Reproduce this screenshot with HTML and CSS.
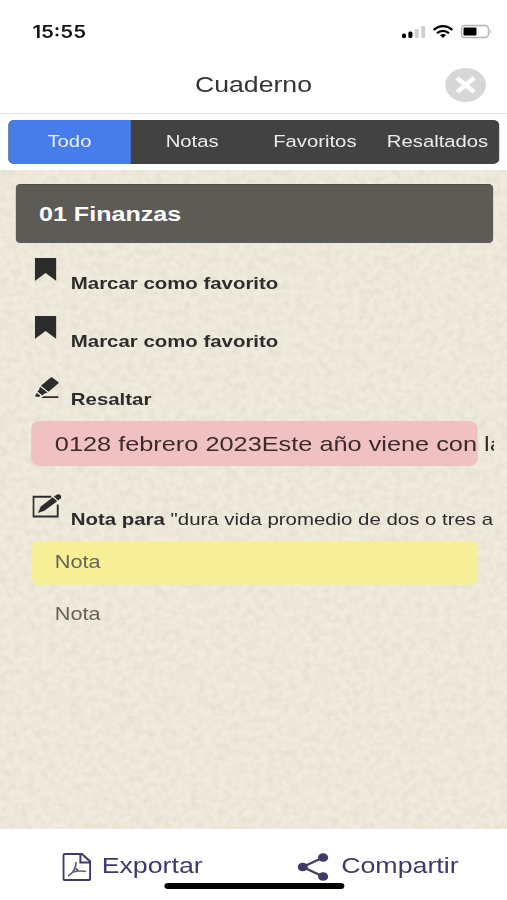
FILE: index.html
```html
<!DOCTYPE html>
<html lang="es">
<head>
<meta charset="utf-8">
<meta name="viewport" content="width=device-width">
<title>Cuaderno</title>
<link rel="stylesheet" href="styles.css">
</head>
<body>
<div class="screen">
  <div class="status">
    <span class="time">15:55</span>
    <svg class="status-icons" viewBox="0 0 90 16" preserveAspectRatio="none">
      <g><rect x="0" y="9.5" width="4" height="4.5" rx="1.5"/><rect x="6.4" y="7.500" width="4" height="6.5" rx="1.5"/></g>
      <g fill="#d0d0d0"><rect x="12.8" y="5" width="4" height="9" rx="1"/><rect x="19.2" y="2" width="4" height="12" rx="1"/></g>
      <g fill="none" stroke="#000" stroke-width="2.3"><path d="M31.6 5.8Q41 -1.500 50.400 5.800M35 9.200Q41 4.500 47 9.200"/></g>
      <path d="M38 11.100Q41 9.100 44 11.100L41 13.900Z"/>
      <rect x="59.500" y="1.500" width="27" height="12" rx="3.500" fill="#fff" stroke="#b4b4b4" stroke-width="1.500"/>
      <rect x="61.500" y="3.500" width="13" height="8" rx="1.300"/>
      <path d="M87.900 5.500Q90 7.500 87.900 9.500Z" fill="#b4b4b4"/>
    </svg>
  </div>
  <header class="header">
    <h1>Cuaderno</h1>
    <button class="close" aria-label="Cerrar"><svg viewBox="0 0 34 34"><circle cx="17" cy="17" r="17" fill="#d7d7d7"/><path d="M10 10L24 24M24 10L10 24" stroke="#fff" stroke-width="4"/></svg></button>
  </header>
  <div class="tabbar">
    <nav class="tabs">
      <a class="tab active">Todo</a><a class="tab">Notas</a><a class="tab">Favoritos</a><a class="tab">Resaltados</a>
    </nav>
  </div>
  <main class="paper">
    <svg class="grain" aria-hidden="true">
      <filter id="fibre" x="0" y="0" width="100%" height="100%">
        <feTurbulence type="fractalNoise" baseFrequency="0.17 0.15" numOctaves="3" seed="8"/>
        <feColorMatrix values="0 0 0 0 .56  0 0 0 0 .48  0 0 0 0 .32  .4 0 0 0 -.13"/>
      </filter>
      <rect width="100%" height="100%" filter="url(#fibre)"/>
    </svg>
    <div class="notebook">
      <h2 class="chapter">01 Finanzas</h2>
      <div class="entry"><svg class="icon mark" viewBox="0 0 22 23" preserveAspectRatio="none"><path d="M0 0H22V23L11 15L0 23Z"/></svg><b>Marcar como favorito</b></div>
      <div class="entry"><svg class="icon mark" viewBox="0 0 22 23" preserveAspectRatio="none"><path d="M0 0H22V23L11 15L0 23Z"/></svg><b>Marcar como favorito</b></div>
      <div class="entry"><svg class="icon marker" viewBox="0 0 25 22" preserveAspectRatio="none"><path d="M16.200 .5Q17 -.2 17.800 .5L23.800 5Q24.700 5.800 23.800 6.500L14 14.800L6.200 8.800ZM5.300 9.700L13 15.600L9.500 16.800L7.800 18.500L2.600 14.600L4.300 12.800ZM2 16L5.800 18.800L4 20L0 19.300ZM9 19.200H24V21H6.500Z"/></svg><b>Resaltar</b></div>
      <div class="highlight">0128 febrero 2023Este año viene con la</div>
      <div class="entry note-entry"><svg class="icon edit" viewBox="0 0 29 24" preserveAspectRatio="none"><path d="M19 2.800H1V22.500H25.500V10.500" fill="none" stroke="#2c2c2c" stroke-width="1.900"/><path d="M5.500 19L8.500 12.600L20.500 3.300L25 7.300L12 16.800ZM21.700 2.600L24 .9Q26.500 -.7 28.500 1.500T28 4.800L25.900 6.500Z"/></svg><span><b>Nota para</b> "dura vida promedio de dos o tres a</span></div>
      <div class="note">Nota</div>
      <div class="note plain">Nota</div>
    </div>
  </main>
  <footer class="footer">
    <a class="action export"><svg viewBox="0 0 28 28" preserveAspectRatio="none" fill="none" stroke="#41396a" stroke-width="2"><path d="M1 2.200Q1 1 2.500 1H19L27 8.500V25.500Q27 27 25.500 27H2.500Q1 27 1 25.500ZM17.500 1V9.500H27"/><path stroke="#625d73" stroke-width="1.700" d="M5.500 23Q13 18.500 13.300 9M13 15.500L15.500 17.800L23 18.500M10.500 19L15.500 17.800"/></svg><span>Exportar</span></a>
    <a class="action share"><svg viewBox="0 0 30 28" preserveAspectRatio="none" fill="#41396a"><path d="M25 4.500L5 14L25 23.500" fill="none" stroke="#41396a" stroke-width="2.300"/><ellipse cx="25" cy="4.500" rx="5" ry="4.300"/><ellipse cx="5" cy="14" rx="5" ry="4.300"/><ellipse cx="25" cy="23.500" rx="5" ry="4.300"/></svg><span>Compartir</span></a>
    <i class="home"></i>
  </footer>
</div>
</body>
</html>
```
FILE: styles.css
```css
* { box-sizing: border-box; }
body { margin: 0; overflow: hidden; background: #fff; }

.screen {
  width: 422.5px;
  height: 900px;
  display: flex;
  flex-direction: column;
  transform: scaleX(1.2);
  transform-origin: 0 0;
  font-family: "Liberation Sans", Arial, sans-serif;
  color: #2c2c2c;
}
.status {
  height: 56px;
  padding: 7px 13px 0 27px;
  display: flex;
  align-items: center;
  justify-content: space-between;
}
.time { font: 600 17px "Inter", sans-serif; color: #111; }
.status-icons { width: 75px; height: 16px; }
.header {
  height: 58px;
  display: flex;
  align-items: center;
  justify-content: center;
  position: relative;
  border-bottom: 1px solid #dfdfdf;
}
h1 { margin: 0; padding-top: 1px; font-size: 22.2px; font-weight: 400; color: #333; }
.close {
  position: absolute;
  right: 17.5px;
  top: 12px;
  width: 34px;
  height: 34px;
  padding: 0;
  border: 0;
  background: none;
}
.close svg { display: block; }
.tabbar { height: 56px; padding: 6px 6.5px 6px 7px; }
.tabs {
  display: grid;
  grid-template-columns: repeat(4, 1fr);
  height: 44px;
  border-radius: 5px;
  overflow: hidden;
  background: #424242;
}
.tab {
  display: flex;
  align-items: center;
  justify-content: center;
  padding: 0 .5px 1px 0;
  font-size: 16.9px;
  color: #ececec;
}
.tab.active { background: #477ceb; }
.paper {
  position: relative;
  height: 659px;
  padding: 14px 12px 0 12.5px;
  background: #efebde;
}
.grain { position: absolute; inset: 0; width: 100%; height: 100%; }
.notebook { position: relative; overflow: hidden; height: 560px; }
.chapter {
  margin: 0;
  height: 59px;
  padding-left: 20px;
  line-height: 58px;
  border-radius: 4px;
  font-size: 20.9px;
  color: #fff;
  background: #5d5b56;
  border-top: 1px solid #504c44;
}
.entry {
  display: flex;
  height: 58px;
  padding: 14px 0 0 16px;
  font-size: 17px;
  white-space: nowrap;
}
.entry > b, .entry > span { line-height: 20px; margin-top: 17px; }
.icon { flex: none; fill: #2c2c2c; }
.mark { width: 18px; height: 23px; margin: 1px 12px 0 .5px; }
.marker { width: 20.5px; height: 22px; margin: 4px 9.5px 0 .5px; }
.highlight {
  width: 372px;
  height: 45px;
  margin: 4px 0 0 13px;
  padding-left: 20.2px;
  line-height: 45px;
  border-radius: 7px;
  background: #f0c1c3;
  color: #3c292b;
  font-size: 21.1px;
  white-space: nowrap;
}
.note-entry { height: 75px; padding: 27px 0 0 14px; }
.edit { width: 24px; height: 24px; margin: 1px 8.5px 0 0; }
.note {
  width: 372px;
  height: 44px;
  margin-left: 13px;
  padding-left: 20.2px;
  line-height: 42px;
  border-radius: 6px;
  background: #f6ef97;
  color: #66645a;
  font-size: 18.1px;
}
.note.plain { margin-top: 8px; background: none; }
.footer {
  position: relative;
  display: flex;
  height: 71px;
  padding: 24px 0 0 52px;
  color: #41396a;
  font-size: 22.3px;
}
.action { display: flex; align-items: flex-start; }
.action span { line-height: 25px; }
.export { width: 196px; }
.export svg { width: 24px; height: 28px; margin-right: 8.7px; }
.share svg { width: 25.5px; height: 28px; margin-right: 10.8px; }
.home {
  position: absolute;
  left: 136.5px;
  top: 54px;
  width: 150px;
  height: 6px;
  border-radius: 3px;
  background: #000;
}
```
